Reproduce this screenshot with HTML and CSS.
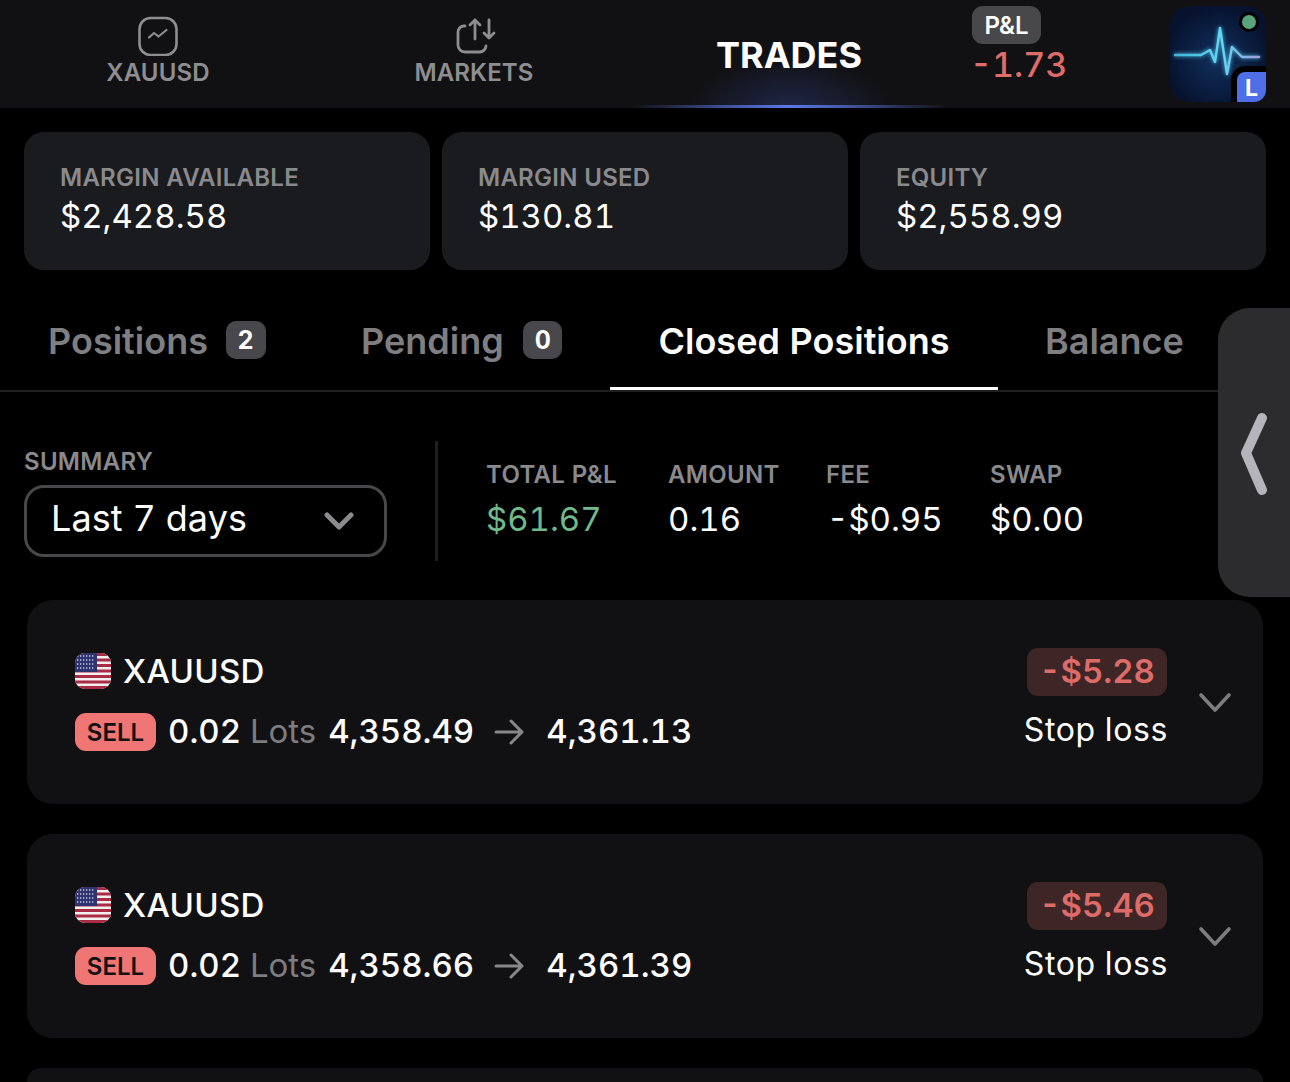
FILE: index.html
```html
<!DOCTYPE html>
<html lang="en">
<head>
    <meta charset="UTF-8">
    <meta name="viewport" content="width=device-width, initial-scale=1.0">
    <title>Trades</title>
    <link rel="stylesheet" href="styles.css">
</head>
<body>

<header class="topbar">
    <div class="nav-item">
        <svg class="nav-icon" width="40" height="40" viewBox="0 0 40 40" fill="none" stroke="#8e8e90" stroke-linecap="round" stroke-linejoin="round">
            <rect x="1.5" y="2" width="37" height="37" rx="11" stroke-width="2.6"/>
            <path d="M11 21.5l5-4.5 4.5 3.500 8-6.500" stroke-width="2.2"/>
        </svg>
        <span>XAUUSD</span>
    </div>
    <div class="nav-item">
        <svg class="nav-icon icon-markets" width="40" height="40" viewBox="0 0 40 40" fill="none" stroke="#8e8e90" stroke-width="2.8" stroke-linecap="round" stroke-linejoin="round">
            <path d="M9 10H8a6 6 0 0 0-6 6v13a7 7 0 0 0 7 7h15a7 7 0 0 0 6-6"/>
            <path d="M19 23V4M14 9l5-5 5 5"/>
            <path d="M33 4v18M28 17l5 5 5-5"/>
        </svg>
        <span>MARKETS</span>
    </div>
    <div class="nav-item nav-active">TRADES</div>
    <div class="pnl">
        <span class="pnl-tag">P&amp;L</span>
        <span class="pnl-value">-1.73</span>
    </div>
    <div class="app-logo">
        <svg width="96" height="96" viewBox="0 0 96 96" fill="none">
            <defs>
                <linearGradient id="pulse" x1="0" x2="1" y1="0" y2="0">
                    <stop offset="0" stop-color="#3fb6d8"/>
                    <stop offset="0.55" stop-color="#63d8f2"/>
                    <stop offset="1" stop-color="#a69be0"/>
                </linearGradient>
            </defs>
            <path class="pulse-line" d="M5 49h26l9-5 5 12 5-34 7 46 5-27 10 10h17" stroke="url(#pulse)" stroke-width="2.4" stroke-linejoin="round" stroke-linecap="round"/>
        </svg>
        <span class="logo-dot"></span>
        <span class="logo-badge">L</span>
    </div>
</header>

<section class="stats">
    <div class="stat-card">
        <div class="stat-label">MARGIN AVAILABLE</div>
        <div class="stat-value">$2,428.58</div>
    </div>
    <div class="stat-card">
        <div class="stat-label">MARGIN USED</div>
        <div class="stat-value">$130.81</div>
    </div>
    <div class="stat-card">
        <div class="stat-label">EQUITY</div>
        <div class="stat-value">$2,558.99</div>
    </div>
</section>

<nav class="tabs">
    <div class="tab tab-positions">Positions <span class="count">2</span></div>
    <div class="tab tab-pending">Pending <span class="count">0</span></div>
    <div class="tab tab-closed">Closed Positions</div>
    <div class="tab tab-balance">Balance</div>
</nav>

<section class="summary">
    <div class="summary-left">
        <div class="summary-label">SUMMARY</div>
        <div class="range-select">
            <span class="range-text">Last 7 days</span>
            <svg width="30" height="18" viewBox="0 0 30 18" fill="none" stroke="#8b8b8d" stroke-width="5" stroke-linecap="round" stroke-linejoin="round">
                <path d="M3 3l12 12 12-12"/>
            </svg>
        </div>
    </div>
    <div class="summary-cols">
        <div class="summary-col col-pnl">
            <div class="summary-label">TOTAL P&amp;L</div>
            <div class="summary-value green">$61.67</div>
        </div>
        <div class="summary-col col-amount">
            <div class="summary-label">AMOUNT</div>
            <div class="summary-value">0.16</div>
        </div>
        <div class="summary-col col-fee">
            <div class="summary-label">FEE</div>
            <div class="summary-value">-$0.95</div>
        </div>
        <div class="summary-col">
            <div class="summary-label">SWAP</div>
            <div class="summary-value">$0.00</div>
        </div>
    </div>
</section>

<section class="trade-list">
    <article class="trade">
        <div class="trade-main">
            <div class="trade-symbol">
                <svg class="flag" width="36" height="36" viewBox="0 0 36 36"><use href="#us-flag"/></svg>
                XAUUSD
            </div>
            <div class="trade-info">
                <span class="side">SELL</span>
                <span class="lots">0.02 <em>Lots</em></span>
                <span class="price">4,358.49</span>
                <svg class="arrow" width="32" height="26" viewBox="0 0 32 26" fill="none"><use href="#price-arrow"/></svg>
                <span class="price">4,361.13</span>
            </div>
        </div>
        <div class="trade-result">
            <span class="loss">-$5.28</span>
            <span class="reason">Stop loss</span>
        </div>
        <svg class="expand" width="34" height="22" viewBox="0 0 34 22" fill="none"><use href="#chevron"/></svg>
    </article>

    <article class="trade">
        <div class="trade-main">
            <div class="trade-symbol">
                <svg class="flag" width="36" height="36" viewBox="0 0 36 36"><use href="#us-flag"/></svg>
                XAUUSD
            </div>
            <div class="trade-info">
                <span class="side">SELL</span>
                <span class="lots">0.02 <em>Lots</em></span>
                <span class="price">4,358.66</span>
                <svg class="arrow" width="32" height="26" viewBox="0 0 32 26" fill="none"><use href="#price-arrow"/></svg>
                <span class="price">4,361.39</span>
            </div>
        </div>
        <div class="trade-result">
            <span class="loss">-$5.46</span>
            <span class="reason">Stop loss</span>
        </div>
        <svg class="expand" width="34" height="22" viewBox="0 0 34 22" fill="none"><use href="#chevron"/></svg>
    </article>

    <article class="trade trade-next"></article>
</section>

<!-- side drawer handle -->
<div class="drawer-handle">
    <svg width="28" height="84" viewBox="0 0 28 84" fill="none" stroke="#b4b4ba" stroke-width="10" stroke-linecap="round" stroke-linejoin="round">
        <path d="M22 6L6 41l16 37"/>
    </svg>
</div>

<!-- shared icons -->
<svg class="defs" width="0" height="0">
    <symbol id="us-flag" viewBox="0 0 36 36">
        <clipPath id="flag-clip"><rect width="36" height="36" rx="10"/></clipPath>
        <g clip-path="url(#flag-clip)">
            <rect width="36" height="36" fill="#f1eff0"/>
            <path d="M0 1.500h36M0 7h36M0 12.500h36M0 18h36M0 23.500h36M0 29h36M0 34.500h36" stroke="#a92c44" stroke-width="3"/>
            <rect width="22" height="19" fill="#2f3470"/>
            <path d="M2 3h18M2 7h18M2 11h18M2 15h18" stroke="#c5c8e4" stroke-width="1.300" stroke-dasharray="1.300 1.700"/>
        </g>
    </symbol>
    <symbol id="price-arrow" viewBox="0 0 32 26">
        <path d="M2 13h26M17 2l11 11-11 11" stroke="#88888a" stroke-width="3" stroke-linecap="round" stroke-linejoin="round" fill="none"/>
    </symbol>
    <symbol id="chevron" viewBox="0 0 34 22">
        <path d="M3 3l14 15 14-15" stroke="#7d7d80" stroke-width="3.600" stroke-linecap="round" stroke-linejoin="round" fill="none"/>
    </symbol>
</svg>

</body>
</html>
```

FILE: styles.css
```css
html, body {
    height: 100%;
}
body {
    margin: 0;
    background-color: #000;
    color: #fff;
    font-family: Inter, "Liberation Sans", sans-serif;
    font-variant-numeric: tabular-nums;
    overflow: hidden;
    position: relative;
}

/* top bar */
.topbar {
    height: 108px;
    display: flex;
    background-color: #111114;
}
.nav-item {
    width: 316px;
    box-sizing: border-box;
    padding-top: 16px;
    display: flex;
    flex-direction: column;
    align-items: center;
    color: #8e8e90;
    font-size: 24px;
    font-weight: 600;
    line-height: 30px;
    letter-spacing: 0.15px;
}
.nav-item span {
    margin-top: 2px;
}
.nav-icon {
    display: block;
}
.icon-markets {
    margin-left: 4px;
}
.nav-active {
    padding: 2px 2px 0 0;
    justify-content: center;
    color: #fff;
    font-size: 36px;
    font-weight: 700;
    line-height: 40px;
    letter-spacing: 0;
    background:
        linear-gradient(90deg, rgba(83, 110, 226, 0), #5a78e6 50%, rgba(83, 110, 226, 0)) bottom / 100% 3px no-repeat,
        radial-gradient(ellipse 100px 50px at 50% 100%, rgba(60, 80, 170, 0.34), rgba(60, 80, 170, 0));
}
.pnl {
    width: 222px;
    box-sizing: border-box;
    padding: 6px 0 0 24px;
    display: flex;
    flex-direction: column;
    align-items: flex-start;
}
.pnl-tag {
    width: 69px;
    height: 38px;
    border-radius: 11px;
    background-color: #48484a;
    font-size: 24px;
    font-weight: 600;
    line-height: 39px;
    text-align: center;
}
.pnl-value {
    margin: 1px 0 0 -2px;
    color: #de6c69;
    font-size: 34px;
    font-weight: 500;
    line-height: 40px;
}
.app-logo {
    position: relative;
    width: 96px;
    height: 96px;
    margin-top: 6px;
    border-radius: 20px;
    background: radial-gradient(circle at 50% 55%, #12305e, #06122e 75%);
}
.app-logo svg {
    display: block;
}
.pulse-line {
    filter: drop-shadow(0 0 2px #4cc6ec);
}
.logo-dot {
    position: absolute;
    top: 6px;
    right: 7px;
    width: 14px;
    height: 14px;
    border: 3px solid #000;
    border-radius: 50%;
    background-color: #58a47c;
}
.logo-badge {
    position: absolute;
    right: 0;
    bottom: 0;
    width: 29px;
    height: 30px;
    border: solid #000;
    border-width: 6px 0 0 6px;
    border-radius: 14px 0 12px 0;
    background-color: #4f6ee8;
    font-size: 23px;
    font-weight: 700;
    line-height: 32px;
    text-align: center;
}

/* account stats */
.stats {
    display: grid;
    grid-template-columns: repeat(3, 1fr);
    gap: 12px;
    margin: 24px 24px 0;
}
.stat-card {
    height: 138px;
    box-sizing: border-box;
    padding: 31px 36px 0;
    border-radius: 20px;
    background-color: #1a1b1f;
}
.stat-label {
    color: #8a8a8d;
    font-size: 24px;
    font-weight: 600;
    line-height: 30px;
    letter-spacing: 0.25px;
}
.stat-value {
    margin-top: 2px;
    font-size: 33px;
    line-height: 42px;
}

/* tabs */
.tabs {
    position: relative;
    height: 120px;
    display: flex;
    border-bottom: 2px solid #1f1f21;
    color: #7f7f82;
    font-size: 36px;
    font-weight: 600;
}
.tab {
    box-sizing: border-box;
    height: 120px;
    padding-top: 49px;
    line-height: 44px;
    white-space: nowrap;
}
.tab-positions {
    width: 313px;
    padding-left: 48px;
}
.tab-pending {
    width: 297px;
    padding-left: 48px;
}
.tab-closed {
    width: 388px;
    text-align: center;
    color: #fff;
    border-bottom: 3px solid #fff;
}
.tab-balance {
    padding-left: 47px;
}
.count {
    display: inline-block;
    width: 40px;
    height: 38px;
    margin-left: 8px;
    border-radius: 10px;
    background-color: #48484c;
    color: #fff;
    font-size: 25px;
    font-weight: 700;
    line-height: 38px;
    text-align: center;
    vertical-align: 5px;
}
.tab-pending .count {
    width: 39px;
    margin-left: 10px;
}

/* summary row */
.summary {
    display: flex;
    margin: 49px 24px 0;
    height: 120px;
}
.summary-left {
    width: 414px;
    box-sizing: border-box;
    padding-top: 6px;
    border-right: 3px solid #1f1f21;
}
.summary-label {
    color: #8a8a8d;
    font-size: 24px;
    font-weight: 600;
    line-height: 30px;
    letter-spacing: 0.3px;
}
.range-select {
    width: 363px;
    height: 72px;
    box-sizing: border-box;
    margin-top: 8px;
    padding: 0 30px 0 24px;
    display: flex;
    align-items: center;
    justify-content: space-between;
    border: 3px solid #48484a;
    border-radius: 20px;
    font-size: 36px;
    letter-spacing: 0.1px;
}
.range-text {
    margin-top: -6px;
}
.summary-cols {
    display: flex;
    padding: 19px 0 0 48px;
}
.summary-col {
    white-space: nowrap;
}
.col-pnl {
    width: 182px;
}
.col-amount {
    width: 158px;
}
.col-fee {
    width: 164px;
}
.summary-value {
    margin-top: 8px;
    font-size: 33px;
    line-height: 42px;
}
.col-fee .summary-value {
    padding-left: 1px;
}
.green {
    color: #6fb98a;
}

/* closed trades */
.trade-list {
    margin: 39px 27px 0;
    display: flex;
    flex-direction: column;
    gap: 30px;
}
.trade {
    height: 204px;
    flex: none;
    box-sizing: border-box;
    padding: 48px 31px 0 48px;
    display: flex;
    border-radius: 26px;
    background-color: #111114;
}
.trade-next {
    height: 14px;
    padding: 0;
    border-radius: 26px 26px 0 0;
}
.trade-main {
    flex: 1;
}
.trade-symbol {
    display: flex;
    align-items: center;
    gap: 12px;
    height: 46px;
    font-size: 33px;
    font-weight: 500;
    letter-spacing: 0.3px;
}
.trade-info {
    display: flex;
    align-items: center;
    height: 38px;
    margin-top: 19px;
    font-size: 33px;
    font-weight: 500;
}
.side {
    width: 81px;
    height: 38px;
    margin-right: 12px;
    border-radius: 11px;
    background-color: #ef7674;
    color: #111;
    font-size: 24px;
    font-weight: 600;
    line-height: 39px;
    text-align: center;
}
.lots em {
    color: #7d7d80;
    font-style: normal;
    font-weight: 400;
}
.lots {
    margin: -2px 12px 0 0;
}
.price {
    margin-top: -2px;
}
.arrow {
    margin: 0 20px 0 20px;
}
.trade-result {
    display: flex;
    flex-direction: column;
    align-items: flex-end;
}
.loss {
    width: 140px;
    height: 48px;
    border-radius: 11px;
    background-color: #3e2526;
    color: #dd6b68;
    font-size: 33px;
    font-weight: 600;
    line-height: 47px;
    text-align: center;
}
.reason {
    margin: 12px -1px 0 0;
    font-size: 32px;
    line-height: 44px;
    letter-spacing: 0.6px;
}
.expand {
    margin: 44px 0 0 31px;
}
.defs {
    position: absolute;
}

/* drawer handle on the right edge */
.drawer-handle {
    position: absolute;
    top: 308px;
    right: 0;
    width: 72px;
    height: 289px;
    box-sizing: border-box;
    padding: 104px 0 0 22px;
    border-radius: 32px 0 0 32px;
    background-color: #2c2c2e;
}
```
